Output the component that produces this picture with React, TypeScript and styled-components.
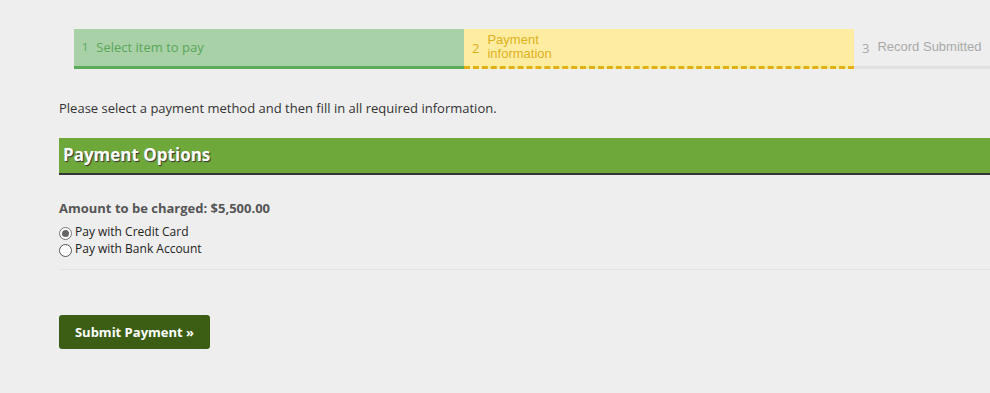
import styled, { createGlobalStyle } from 'styled-components';

const GlobalStyle = createGlobalStyle`
  html, body {
    margin: 0;
    padding: 0;
    background: #eeeeee;
    overflow: hidden;
  }
  body {
    font-family: "Open Sans", Lato, sans-serif;
  }
`;

const Page = styled.div`
  padding: 29px 0 0 59px;
  overflow: hidden;
`;

const Steps = styled.div`
  display: flex;
  margin-left: 15px;
  height: 40px;
`;

type StepKind = 'done' | 'current' | 'todo';

const stepColors: Record<StepKind, { bg: string; fg: string; border: string }> = {
  done: { bg: '#a8d1a8', fg: '#5aa75a', border: '3px solid #5aab5a' },
  current: { bg: '#feeda0', fg: '#e0b020', border: '3px dashed #e1b014' },
  todo: { bg: '#eeeeee', fg: '#a9a9a9', border: '3px solid #e1e1e1' },
};

const Step = styled.div<{ $kind: StepKind }>`
  width: 390px;
  flex-shrink: 0;
  box-sizing: border-box;
  display: flex;
  align-items: center;
  gap: 8px;
  padding: 0 8px;
  background: ${(p) => stepColors[p.$kind].bg};
  color: ${(p) => stepColors[p.$kind].fg};
  border-bottom: ${(p) => stepColors[p.$kind].border};
  font-size: 13px;
`;

const StepNum = styled.span<{ $small?: boolean }>`
  font-size: ${(p) => (p.$small ? '11px' : '13px')};
  margin-top: ${(p) => (p.$small ? '-3px' : '0')};
`;

const StepLabel = styled.span<{ $arial?: boolean }>`
  line-height: 14px;
  font-family: ${(p) => (p.$arial ? '"Liberation Sans", Arial, sans-serif' : 'inherit')};
  font-size: 13px;
  margin-top: -2px;
`;

const Intro = styled.p`
  margin: 30px 0 0;
  font-size: 13px;
  color: #333;
`;

const SectionHeader = styled.h2`
  margin: 21px 0 0;
  height: 37px;
  box-sizing: border-box;
  background: #6fa83a;
  border-bottom: 2px solid #333;
  color: #fff;
  font-size: 17px;
  font-weight: 700;
  padding: 5px 4px 0;
  text-shadow: 1px 1px 1px #333;
`;

const Amount = styled.div`
  margin-top: 24px;
  font-size: 13px;
  font-weight: 700;
  color: #555;
`;

const RadioGroup = styled.div`
  margin-top: 6px;
  display: flex;
  flex-direction: column;
  padding-bottom: 12px;
  border-bottom: 1px solid #e2e2e2;
`;

const RadioRow = styled.label`
  display: flex;
  align-items: center;
  font-size: 12px;
  color: #222;
  height: 17px;
`;

const Radio = styled.span<{ $checked?: boolean }>`
  width: 11px;
  height: 11px;
  border-radius: 50%;
  border: 1px solid ${(p) => (p.$checked ? '#777' : '#555')};
  background: #fff;
  margin: 4px 3px 0 0;
  display: flex;
  align-items: center;
  justify-content: center;
  &::after {
    content: '';
    display: ${(p) => (p.$checked ? 'block' : 'none')};
    width: 7px;
    height: 7px;
    border-radius: 50%;
    background: #666;
  }
`;

const SubmitButton = styled.button`
  margin-top: 45px;
  width: 151px;
  height: 34px;
  border: none;
  border-radius: 3px;
  background: #3b5e14;
  color: #fff;
  font-family: inherit;
  font-size: 13px;
  font-weight: 700;
  cursor: pointer;
`;

export default function App() {
  return (
    <>
      <GlobalStyle />
      <Page>
        <Steps>
          <Step $kind="done">
            <StepNum $small>1</StepNum>
            <StepLabel>Select item to pay</StepLabel>
          </Step>
          <Step $kind="current">
            <StepNum>2</StepNum>
            <StepLabel $arial>
              Payment
              <br />
              information
            </StepLabel>
          </Step>
          <Step $kind="todo">
            <StepNum>3</StepNum>
            <StepLabel $arial>Record Submitted</StepLabel>
          </Step>
        </Steps>
        <Intro>Please select a payment method and then fill in all required information.</Intro>
        <SectionHeader>Payment Options</SectionHeader>
        <Amount>Amount to be charged: $5,500.00</Amount>
        <RadioGroup>
          <RadioRow>
            <Radio $checked />
            Pay with Credit Card
          </RadioRow>
          <RadioRow>
            <Radio />
            Pay with Bank Account
          </RadioRow>
        </RadioGroup>
        <SubmitButton>Submit Payment »</SubmitButton>
      </Page>
    </>
  );
}
